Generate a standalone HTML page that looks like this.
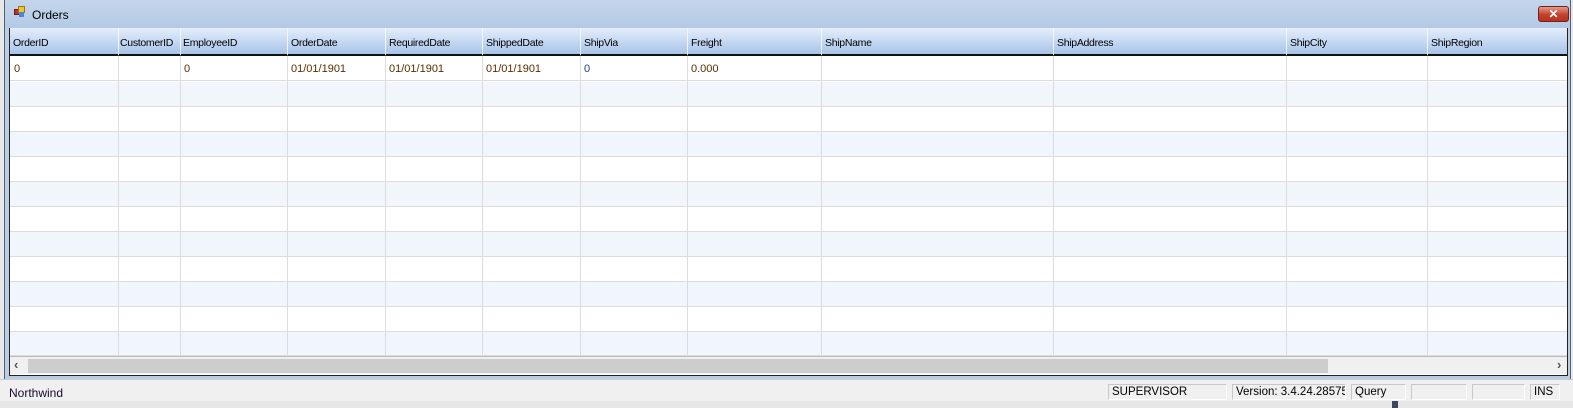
<!DOCTYPE html>
<html><head><style>
*{margin:0;padding:0;box-sizing:border-box}
body{width:1573px;height:408px;background:#e8e8e8;position:relative;overflow:hidden;font-family:"Liberation Sans",sans-serif;font-size:11px;color:#000}
.abs{position:absolute}
#frame{left:4px;top:0;width:1567px;height:380px;background:#b9cde5;border:1px solid #555f6e;border-top:none}
#title{left:5px;top:0;width:1565px;height:28px;background:linear-gradient(#c4d6ec,#b3c9e4)}
#grid{left:9px;top:28px;width:1559px;height:348px;background:#fff;border:1px solid #222;border-top:none;overflow:hidden}
.hdr{position:absolute;top:0;height:28px;background:linear-gradient(#e4eefb,#c6d9f3 50%,#a9c4ea);border-right:1px solid #f4f8fe;border-bottom:2px solid #111;padding:9px 0 0 3px;font-size:10.5px;letter-spacing:-0.3px;white-space:nowrap;overflow:hidden}
.row{position:absolute;left:0;width:1559px;height:25px;border-bottom:1px solid #dcdcdc}
.vl{position:absolute;top:28px;height:300px;width:1px;background:#dcdcdc}
.c{position:absolute;top:7px;color:#5b2c00;font-size:11px}
#status{left:0;top:379px;width:1573px;height:22px;background:#f0f0f0;border-top:1px solid #ccc}
.p{position:absolute;top:384px;height:16px;border:1px solid #c8c8c8;border-right-color:#fff;border-bottom-color:#fff;padding:1px 0 0 3px;font-size:11.5px;color:#000;white-space:nowrap;overflow:hidden}
</style></head><body>
<div class="abs" id="frame"></div>
<div class="abs" id="title"></div>
<div class="abs" style="left:14px;top:9px;width:6px;height:6px;background:#c0332b;border:1px solid #6b1d18"></div>
<div class="abs" style="left:18px;top:6px;width:7px;height:7px;background:#f2c12e;border:1px solid #9b7a10"></div>
<div class="abs" style="left:19px;top:12px;width:5px;height:5px;background:#4a86d8"></div>
<div class="abs" style="left:32px;top:8px;font-size:12px">Orders</div>
<div class="abs" style="left:1538px;top:6px;width:31px;height:16px;border-radius:3px;background:linear-gradient(#e49b88,#c4412b 55%,#b8321e);border:1px solid #6e2418;color:#fff;font-weight:bold;font-size:12px;text-align:center;line-height:14px">✕</div>
<div class="abs" id="grid">
<div class="row" style="top:28px;background:#fff"></div>
<div class="row" style="top:54px;background:#f1f6fd"></div>
<div class="row" style="top:79px;background:#fff"></div>
<div class="row" style="top:104px;background:#f1f6fd"></div>
<div class="row" style="top:129px;background:#fff"></div>
<div class="row" style="top:154px;background:#f1f6fd"></div>
<div class="row" style="top:179px;background:#fff"></div>
<div class="row" style="top:204px;background:#f1f6fd"></div>
<div class="row" style="top:229px;background:#fff"></div>
<div class="row" style="top:254px;background:#f1f6fd"></div>
<div class="row" style="top:279px;background:#fff"></div>
<div class="row" style="top:304px;background:#f1f6fd;height:24px"></div>
<div class="vl" style="left:108px"></div><div class="vl" style="left:170px"></div><div class="vl" style="left:277px"></div><div class="vl" style="left:375px"></div><div class="vl" style="left:472px"></div><div class="vl" style="left:570px"></div><div class="vl" style="left:677px"></div><div class="vl" style="left:811px"></div><div class="vl" style="left:1043px"></div><div class="vl" style="left:1276px"></div><div class="vl" style="left:1417px"></div>
<div class="hdr" style="left:0;width:109px">OrderID</div>
<div class="hdr" style="left:109px;width:62px;padding-left:1px">CustomerID</div>
<div class="hdr" style="left:171px;width:107px;padding-left:2px">EmployeeID</div>
<div class="hdr" style="left:278px;width:98px">OrderDate</div>
<div class="hdr" style="left:376px;width:97px">RequiredDate</div>
<div class="hdr" style="left:473px;width:98px">ShippedDate</div>
<div class="hdr" style="left:571px;width:107px">ShipVia</div>
<div class="hdr" style="left:678px;width:134px">Freight</div>
<div class="hdr" style="left:812px;width:232px">ShipName</div>
<div class="hdr" style="left:1044px;width:233px">ShipAddress</div>
<div class="hdr" style="left:1277px;width:141px">ShipCity</div>
<div class="hdr" style="left:1418px;width:141px;border-right:none">ShipRegion</div>
<div class="c" style="left:4px;top:35px">0</div>
<div class="c" style="left:174px;top:35px">0</div>
<div class="c" style="left:281px;top:35px">01/01/1901</div>
<div class="c" style="left:379px;top:35px">01/01/1901</div>
<div class="c" style="left:476px;top:35px">01/01/1901</div>
<div class="c" style="left:574px;top:35px;color:#1a3c8c">0</div>
<div class="c" style="left:681px;top:35px">0.000</div>
<div class="abs" style="left:0;top:328px;width:1559px;height:18px;background:#f0f0f0;border-top:1px solid #bbb"></div>
<div class="abs" style="left:18px;top:331px;width:1300px;height:14px;background:#cdcdcd"></div>
<div class="abs" style="left:4px;top:329px;font-size:13px;font-weight:bold;color:#555">‹</div>
<div class="abs" style="left:1547px;top:329px;font-size:13px;font-weight:bold;color:#555">›</div>
</div>
<div class="abs" id="status"></div>
<div class="abs" style="left:9px;top:386px;font-size:12px;color:#1a0a30">Northwind</div>
<div class="p" style="left:1108px;width:119px">SUPERVISOR</div>
<div class="p" style="left:1232px;width:114px">Version: 3.4.24.28575</div>
<div class="p" style="left:1351px;width:55px">Query</div>
<div class="p" style="left:1411px;width:56px"></div>
<div class="p" style="left:1472px;width:53px"></div>
<div class="p" style="left:1530px;width:30px">INS</div>
<div class="abs" style="left:0;top:401px;width:1573px;height:7px;background:#e6e6e6"></div>
<div class="abs" style="left:1392px;top:401px;width:6px;height:7px;background:#3c4660"></div>
</body></html>
